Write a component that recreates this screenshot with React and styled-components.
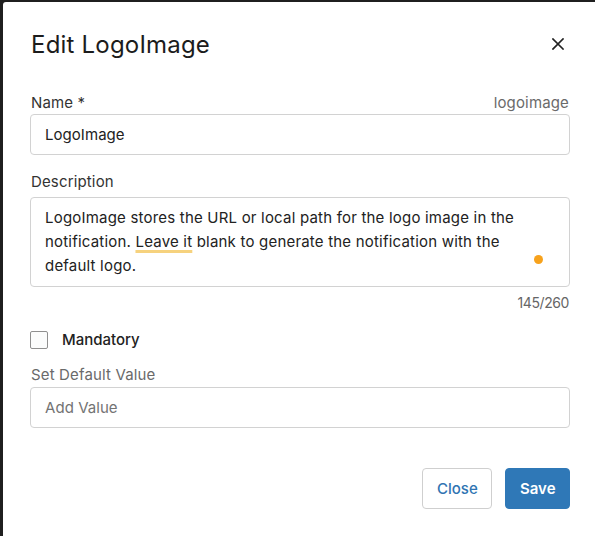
import React from "react";
import styled, { createGlobalStyle } from "styled-components";

const Global = createGlobalStyle`
  html, body { margin: 0; padding: 0; }
  body {
    background: #1f1f1f;
    font-family: Inter, "Noto Sans", "Liberation Sans", sans-serif;
    overflow: hidden;
  }
  * { box-sizing: border-box; }
`;

const Backdrop = styled.div`
  padding: 2px 0 0 3px;
  height: 536px;
`;

const Card = styled.div`
  background: #ffffff;
  height: 100%;
  border-top-left-radius: 3px;
  padding: 27px 25px 0 27px;
  display: flex;
  flex-direction: column;
`;

const Header = styled.div`
  display: flex;
  align-items: center;
  justify-content: space-between;
  height: 32px;
  margin-bottom: 32px;
`;

const Title = styled.h1`
  margin: 0;
  font-size: 24px;
  line-height: 32px;
  font-weight: 400;
  letter-spacing: 0.2px;
  color: #1c1c1c;
  padding-left: 1px;
`;

const CloseIcon = styled.button`
  border: 0;
  background: none;
  padding: 0;
  width: 14px;
  height: 14px;
  margin-right: 5px;
  margin-top: -3px;
  display: flex;
  align-items: center;
  justify-content: center;
  cursor: pointer;
`;

const LabelRow = styled.div`
  display: flex;
  justify-content: space-between;
  align-items: center;
  height: 20px;
  margin-bottom: ${(p) => p.$gap || 1}px;
`;

const Label = styled.label`
  font-size: 15px;
  line-height: 20px;
  letter-spacing: 0.15px;
  padding-left: 1px;
  color: ${(p) => (p.$muted ? "#6a6a6a" : "#333333")};
`;

const Hint = styled.span`
  font-size: 15px;
  line-height: 20px;
  letter-spacing: 0.15px;
  color: #6a6a6a;
  margin-right: 1px;
`;

const Input = styled.div`
  height: 41px;
  border: 1px solid #d2d2d2;
  border-radius: 4px;
  display: flex;
  align-items: center;
  padding: 0 14px;
  font-size: 15px;
  letter-spacing: 0.05px;
  color: ${(p) => (p.$placeholder ? "#737373" : "#222222")};
  margin-bottom: ${(p) => p.$after || 0}px;
`;

const AreaWrap = styled.div`
  position: relative;
  height: 90px;
  border: 1px solid #d2d2d2;
  border-radius: 4px;
  padding: 8px 40px 8px 14px;
  font-size: 15px;
  line-height: 24px;
  letter-spacing: 0.2px;
  color: #222222;
`;

const Flagged = styled.span`
  text-decoration: underline;
  text-decoration-color: #f6d27e;
  text-decoration-thickness: 3px;
  text-underline-offset: 3px;
`;

const Dot = styled.span`
  position: absolute;
  right: 26px;
  top: 57px;
  width: 9px;
  height: 9px;
  border-radius: 50%;
  background: #f7a21c;
`;

const Counter = styled.div`
  text-align: right;
  font-size: 14px;
  line-height: 20px;
  letter-spacing: -0.4px;
  color: #666666;
  margin: 6px 1px 16px 0;
`;

const CheckRow = styled.label`
  display: flex;
  align-items: center;
  gap: 14px;
  height: 20px;
  margin-bottom: 16px;
  font-size: 15px;
  font-weight: 500;
  color: #222222;
`;

const Box = styled.span`
  width: 18px;
  height: 18px;
  border: 1px solid #8f8f8f;
  border-radius: 2px;
  background: #fbfcfc;
  margin-top: 1px;
`;

const Footer = styled.div`
  display: flex;
  justify-content: flex-end;
  gap: 13px;
  margin-top: 40px;
`;

const Button = styled.button`
  height: 41px;
  padding: 0 14px;
  border-radius: 4px;
  font-family: inherit;
  font-size: 15px;
  font-weight: ${(p) => (p.$primary ? 600 : 500)};
  border: 1px solid ${(p) => (p.$primary ? "#2f78b7" : "#cfcfcf")};
  background: ${(p) => (p.$primary ? "#2f78b7" : "#ffffff")};
  color: ${(p) => (p.$primary ? "#ffffff" : "#2f74b2")};
  width: ${(p) => p.$w}px;
  cursor: pointer;
`;

export default function App() {
  return (
    <>
      <Global />
      <Backdrop>
        <Card>
          <Header>
            <Title>Edit LogoImage</Title>
            <CloseIcon aria-label="Close">
              <svg width="12" height="12" viewBox="0 0 12 12">
                <path d="M1 1L11 11M11 1L1 11" stroke="#222" strokeWidth="1.7" strokeLinecap="square" />
              </svg>
            </CloseIcon>
          </Header>

          <LabelRow $gap={1}>
            <Label>Name *</Label>
            <Hint>logoimage</Hint>
          </LabelRow>
          <Input $after={17}>LogoImage</Input>

          <LabelRow $gap={5}>
            <Label>Description</Label>
          </LabelRow>
          <AreaWrap>
            LogoImage stores the URL or local path for the logo image in the notification.{" "}
            <Flagged>Leave it</Flagged> blank to generate the notification with the default logo.
            <Dot />
          </AreaWrap>
          <Counter>145/260</Counter>

          <CheckRow>
            <Box />
            Mandatory
          </CheckRow>

          <LabelRow $gap={2}>
            <Label $muted>Set Default Value</Label>
          </LabelRow>
          <Input $placeholder>Add Value</Input>

          <Footer>
            <Button $w={70}>Close</Button>
            <Button $primary $w={65}>Save</Button>
          </Footer>
        </Card>
      </Backdrop>
    </>
  );
}
